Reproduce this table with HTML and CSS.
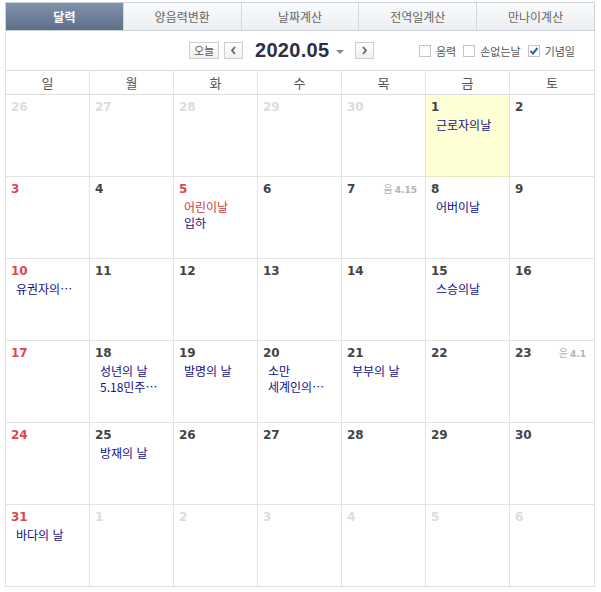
FILE: index.html
```html
<!DOCTYPE html>
<html lang="ko">
<head>
    <meta charset="utf-8">
    <title>달력</title>
    <link rel="stylesheet" href="styles.css">
</head>
<body>
    <div class="cal">
        <ul class="tabs">
            <li class="on">달력</li>
            <li>양음력변환</li>
            <li>날짜계산</li>
            <li>전역일계산</li>
            <li>만나이계산</li>
        </ul>

        <div class="head">
            <div class="nav">
                <span class="btn today-btn">오늘</span>
                <span class="btn arrow prev">
                    <svg width="7" height="9" viewBox="0 0 7 9"><path d="M5 1 L2 4.5 L5 8" fill="none" stroke="#666" stroke-width="1.8"/></svg>
                </span>
                <span class="title">2020.05</span>
                <span class="caret"></span>
                <span class="btn arrow next">
                    <svg width="7" height="9" viewBox="0 0 7 9"><path d="M2 1 L5 4.5 L2 8" fill="none" stroke="#666" stroke-width="1.8"/></svg>
                </span>
            </div>
            <div class="opts">
                <label class="opt"><span class="box"></span>음력</label>
                <label class="opt"><span class="box"></span>손없는날</label>
                <label class="opt"><span class="box checked">
                    <svg width="10" height="10" viewBox="0 0 10 10"><path d="M1.5 5 L4 7.5 L8.5 2" fill="none" stroke="#2f64ad" stroke-width="2"/></svg>
                </span>기념일</label>
            </div>
        </div>

        <div class="week">
            <div>일</div><div>월</div><div>화</div><div>수</div><div>목</div><div>금</div><div>토</div>
        </div>

        <div class="grid">
            <!-- row 1 -->
            <div class="day other"><b>26</b></div>
            <div class="day other"><b>27</b></div>
            <div class="day other"><b>28</b></div>
            <div class="day other"><b>29</b></div>
            <div class="day other"><b>30</b></div>
            <div class="day today"><b>1</b><p class="ev">근로자의날</p></div>
            <div class="day"><b>2</b></div>
            <!-- row 2 -->
            <div class="day sun"><b>3</b></div>
            <div class="day"><b>4</b></div>
            <div class="day sun"><b>5</b><p class="ev red">어린이날</p><p class="ev">입하</p></div>
            <div class="day"><b>6</b></div>
            <div class="day"><b>7</b><span class="lunar">음<i>4.15</i></span></div>
            <div class="day"><b>8</b><p class="ev">어버이날</p></div>
            <div class="day"><b>9</b></div>
            <!-- row 3 -->
            <div class="day sun"><b>10</b><p class="ev">유권자의…</p></div>
            <div class="day"><b>11</b></div>
            <div class="day"><b>12</b></div>
            <div class="day"><b>13</b></div>
            <div class="day"><b>14</b></div>
            <div class="day"><b>15</b><p class="ev">스승의날</p></div>
            <div class="day"><b>16</b></div>
            <!-- row 4 -->
            <div class="day sun"><b>17</b></div>
            <div class="day"><b>18</b><p class="ev">성년의 날</p><p class="ev">5.18민주…</p></div>
            <div class="day"><b>19</b><p class="ev">발명의 날</p></div>
            <div class="day"><b>20</b><p class="ev">소만</p><p class="ev">세계인의…</p></div>
            <div class="day"><b>21</b><p class="ev">부부의 날</p></div>
            <div class="day"><b>22</b></div>
            <div class="day"><b>23</b><span class="lunar">윤<i>4.1</i></span></div>
            <!-- row 5 -->
            <div class="day sun"><b>24</b></div>
            <div class="day"><b>25</b><p class="ev">방재의 날</p></div>
            <div class="day"><b>26</b></div>
            <div class="day"><b>27</b></div>
            <div class="day"><b>28</b></div>
            <div class="day"><b>29</b></div>
            <div class="day"><b>30</b></div>
            <!-- row 6 -->
            <div class="day sun"><b>31</b><p class="ev">바다의 날</p></div>
            <div class="day other"><b>1</b></div>
            <div class="day other"><b>2</b></div>
            <div class="day other"><b>3</b></div>
            <div class="day other"><b>4</b></div>
            <div class="day other"><b>5</b></div>
            <div class="day other"><b>6</b></div>
        </div>
    </div>
</body>
</html>
```

FILE: styles.css
```css
body {
    margin: 0;
    padding: 2px 6px 0 5px;
    background: #fff;
    font-family: "Noto Sans CJK KR", "Noto Sans", sans-serif;
    font-size: 12px;
    color: #555;
}

.cal {
    width: 590px;
}

/* tabs */
.tabs {
    display: flex;
    margin: 0;
    padding: 0;
    list-style: none;
    height: 29px;
    border: 1px solid #cdd2da;
    box-sizing: border-box;
}
.tabs li {
    flex: 1;
    text-align: center;
    line-height: 27px;
    font-size: 12px;
    color: #666;
    background: linear-gradient(#fafbfc, #eceef1);
    border-left: 1px solid #d3d7de;
}
.tabs li:first-child {
    border-left: 0;
}
.tabs li.on {
    color: #fff;
    font-weight: bold;
    background: linear-gradient(#8092ab, #5d6f89);
}

/* month header */
.head {
    display: flex;
    align-items: center;
    height: 39px;
    border-left: 1px solid #e3e3e3;
    border-right: 1px solid #e3e3e3;
}
.nav {
    display: flex;
    align-items: center;
    margin-left: 183px;
}
.btn {
    display: flex;
    align-items: center;
    justify-content: center;
    height: 17px;
    box-sizing: border-box;
    border: 1px solid #cfcfcf;
    background: linear-gradient(#fff, #f1f1f1);
}
.today-btn {
    width: 30px;
    font-size: 11px;
    color: #555;
    line-height: 15px;
}
.arrow {
    width: 19px;
}
.prev {
    margin-left: 5px;
}
.title {
    margin-left: 12px;
    font-family: "Liberation Sans", Arial, sans-serif;
    font-size: 20px;
    font-weight: bold;
    color: #2c2f48;
    letter-spacing: 0.3px;
}
.caret {
    width: 0;
    height: 0;
    margin-left: 7px;
    margin-top: 2px;
    border-left: 4px solid transparent;
    border-right: 4px solid transparent;
    border-top: 4px solid #888;
}
.next {
    margin-left: 11px;
}

.opts {
    display: flex;
    align-items: center;
    margin-left: auto;
    margin-right: 19px;
}
.opt {
    display: flex;
    align-items: center;
    font-size: 11px;
    color: #555;
    margin-left: 7px;
}
.box {
    display: flex;
    align-items: center;
    justify-content: center;
    width: 12px;
    height: 12px;
    box-sizing: border-box;
    border: 1px solid #c4c4c4;
    background: #fff;
    margin-right: 5px;
}

/* weekday row */
.week {
    display: grid;
    grid-template-columns: repeat(6, 84px) 1fr;
    border: 1px solid #dcdcdc;
    border-right: 0;
    height: 25px;
    box-sizing: border-box;
}
.week div {
    border-right: 1px solid #e3e3e3;
    text-align: center;
    line-height: 23px;
    font-size: 13px;
    color: #555;
}

/* days */
.grid {
    display: grid;
    grid-template-columns: repeat(6, 84px) 1fr;
    grid-auto-rows: 82px;
    border-left: 1px solid #e3e3e3;
}
.day {
    position: relative;
    box-sizing: border-box;
    border-right: 1px solid #e3e3e3;
    border-bottom: 1px solid #e3e3e3;
    padding: 4px 6px 0 5px;
    overflow: hidden;
}
.day b {
    display: block;
    font-family: "DejaVu Sans", Verdana, sans-serif;
    font-size: 12px;
    line-height: 16px;
    color: #444;
}
.day.sun b {
    color: #e0464e;
}
.day.other b {
    color: #dcdcdc;
}
.day.today {
    background: #ffffd6;
    border-right-color: #e9e7b4;
    border-bottom-color: #e9e7b4;
}

.ev {
    margin: 0 0 0 5px;
    font-size: 12px;
    line-height: 16px;
    color: #10108a;
    white-space: nowrap;
}
.day b + .ev {
    margin-top: 2px;
}
.ev.red {
    color: #c8413a;
}

.lunar {
    position: absolute;
    top: 6px;
    right: 8px;
    font-size: 10px;
    line-height: 12px;
    color: #b3b3b3;
}
.lunar i {
    font-style: normal;
    font-family: "DejaVu Sans", Verdana, sans-serif;
    font-weight: bold;
    font-size: 9px;
    margin-left: 2px;
}
```
